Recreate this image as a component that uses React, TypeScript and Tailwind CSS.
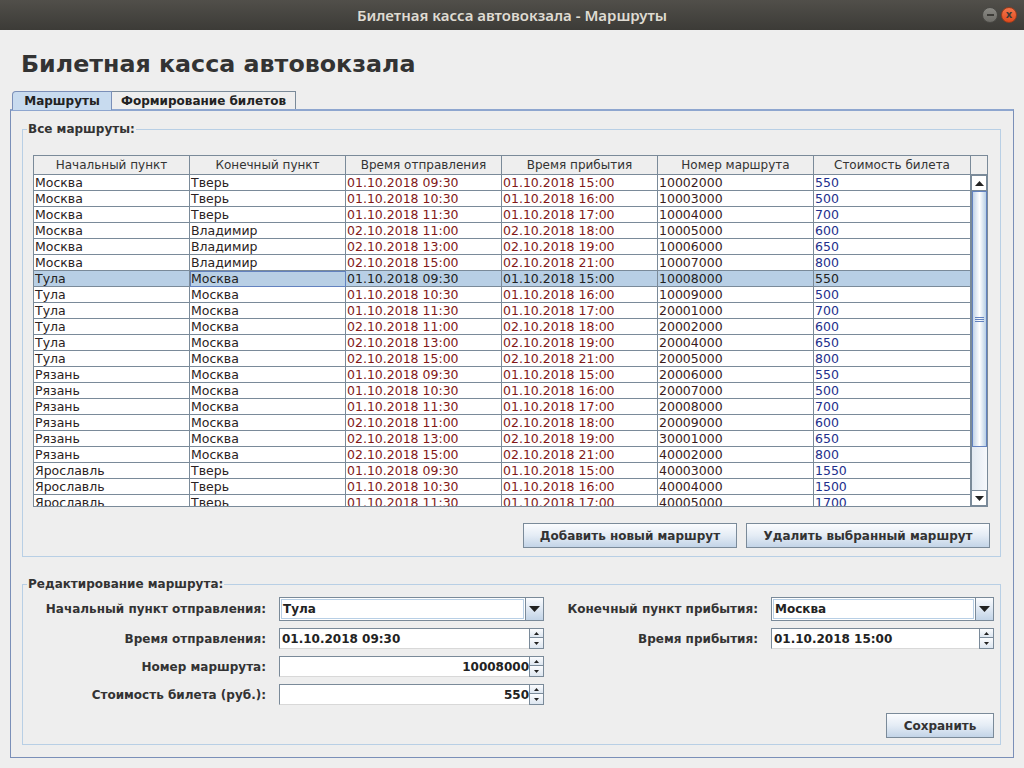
import React from "react";

type Row = [string, string, string, string, string, string];

const rows: Row[] = [
  ["Москва", "Тверь", "01.10.2018 09:30", "01.10.2018 15:00", "10002000", "550"],
  ["Москва", "Тверь", "01.10.2018 10:30", "01.10.2018 16:00", "10003000", "500"],
  ["Москва", "Тверь", "01.10.2018 11:30", "01.10.2018 17:00", "10004000", "700"],
  ["Москва", "Владимир", "02.10.2018 11:00", "02.10.2018 18:00", "10005000", "600"],
  ["Москва", "Владимир", "02.10.2018 13:00", "02.10.2018 19:00", "10006000", "650"],
  ["Москва", "Владимир", "02.10.2018 15:00", "02.10.2018 21:00", "10007000", "800"],
  ["Тула", "Москва", "01.10.2018 09:30", "01.10.2018 15:00", "10008000", "550"],
  ["Тула", "Москва", "01.10.2018 10:30", "01.10.2018 16:00", "10009000", "500"],
  ["Тула", "Москва", "01.10.2018 11:30", "01.10.2018 17:00", "20001000", "700"],
  ["Тула", "Москва", "02.10.2018 11:00", "02.10.2018 18:00", "20002000", "600"],
  ["Тула", "Москва", "02.10.2018 13:00", "02.10.2018 19:00", "20004000", "650"],
  ["Тула", "Москва", "02.10.2018 15:00", "02.10.2018 21:00", "20005000", "800"],
  ["Рязань", "Москва", "01.10.2018 09:30", "01.10.2018 15:00", "20006000", "550"],
  ["Рязань", "Москва", "01.10.2018 10:30", "01.10.2018 16:00", "20007000", "500"],
  ["Рязань", "Москва", "01.10.2018 11:30", "01.10.2018 17:00", "20008000", "700"],
  ["Рязань", "Москва", "02.10.2018 11:00", "02.10.2018 18:00", "20009000", "600"],
  ["Рязань", "Москва", "02.10.2018 13:00", "02.10.2018 19:00", "30001000", "650"],
  ["Рязань", "Москва", "02.10.2018 15:00", "02.10.2018 21:00", "40002000", "800"],
  ["Ярославль", "Тверь", "01.10.2018 09:30", "01.10.2018 15:00", "40003000", "1550"],
  ["Ярославль", "Тверь", "01.10.2018 10:30", "01.10.2018 16:00", "40004000", "1500"],
  ["Ярославль", "Тверь", "01.10.2018 11:30", "01.10.2018 17:00", "40005000", "1700"],
];

const headers = [
  "Начальный пункт",
  "Конечный пункт",
  "Время отправления",
  "Время прибытия",
  "Номер маршрута",
  "Стоимость билета",
];

const colW = ["w-[156px]", "w-[156px]", "w-[156px]", "w-[156px]", "w-[156px]", "w-[157px]"];
const colColor = [
  "text-[#2a2222]",
  "text-[#2a2222]",
  "text-[#821818]",
  "text-[#821818]",
  "text-[#3a1c1c]",
  "text-[#1d2f8c]",
];

const FONT = { fontFamily: '"DejaVu Sans", Verdana, sans-serif' };

function Triangle({ down = true, size = 5 }: { down?: boolean; size?: number }) {
  return (
    <svg width={size * 2 + 1} height={size + 1} viewBox={`0 0 ${size * 2 + 1} ${size + 1}`}>
      {down ? (
        <polygon points={`0,0 ${size * 2 + 1},0 ${size + 0.5},${size + 1}`} fill="#222" />
      ) : (
        <polygon points={`0,${size + 1} ${size * 2 + 1},${size + 1} ${size + 0.5},0`} fill="#222" />
      )}
    </svg>
  );
}

function Button({ label, w }: { label: string; w: string }) {
  return (
    <div
      className={`${w} h-[25px] border border-[#7a8a99] bg-gradient-to-b from-[#fbfcfe] via-[#e4ecf5] to-[#c3d4e7] flex items-center justify-center text-[12px] font-bold text-[#333]`}
    >
      {label}
    </div>
  );
}

function Combo({ value, w }: { value: string; w: string }) {
  return (
    <div className={`${w} h-[24px] border border-[#7a8a99] flex bg-white`}>
      <div className="flex-1 m-[1px] border border-[#b8cfe5] flex items-center px-[1px] text-[12px] font-bold text-[#222]">
        {value}
      </div>
      <div className="w-[18px] border-l border-[#7a8a99] bg-gradient-to-b from-[#fbfcfe] to-[#c3d4e7] flex items-center justify-center">
        <Triangle down size={5} />
      </div>
    </div>
  );
}

function Spinner({ value, w, right = false }: { value: string; w: string; right?: boolean }) {
  return (
    <div className={`${w} h-[21px] flex`}>
      <div
        className={`flex-1 bg-white border-t border-l border-[#7a8a99] border-b border-b-[#d8d8d8] flex items-center text-[12px] font-bold text-[#222] ${
          right ? "justify-end pr-0" : "pl-[2px]"
        }`}
      >
        {value}
      </div>
      <div className="w-[15px] flex flex-col">
        <div className="h-[10px] border border-[#7a8a99] bg-gradient-to-b from-[#fbfcfe] to-[#dde6f0] flex items-center justify-center">
          <Triangle down={false} size={2} />
        </div>
        <div className="h-[11px] border border-t-0 border-[#7a8a99] bg-gradient-to-b from-[#fbfcfe] to-[#dde6f0] flex items-center justify-center">
          <Triangle down size={2} />
        </div>
      </div>
    </div>
  );
}

function Label({ text, w }: { text: string; w: string }) {
  return (
    <div className={`${w} shrink-0 text-right text-[12px] font-bold text-[#333] pr-[13px] whitespace-nowrap`}>
      {text}
    </div>
  );
}

export default function App() {
  return (
    <div className="w-[1024px] h-[768px] bg-[#eeeeee] flex flex-col overflow-hidden" style={FONT}>
      {/* Title bar */}
      <div className="h-[30px] bg-gradient-to-b from-[#514f4a] to-[#3c3b37] flex items-center relative shrink-0">
        <div
          className="flex-1 text-center text-[15px] font-semibold text-[#dfdbd2]"
          style={{ fontFamily: '"Noto Sans", "Open Sans", sans-serif' }}
        >
          Билетная касса автовокзала - Маршруты
        </div>
        <div className="absolute right-[7px] top-[7px] flex gap-[3px]">
          <div className="w-[16px] h-[16px] rounded-full bg-gradient-to-b from-[#8a8984] to-[#6d6c67] border border-[#4a4945] flex items-center justify-center">
            <div className="w-[7px] h-[1.5px] bg-[#3c3b37]" />
          </div>
          <div className="w-[16px] h-[16px] rounded-full bg-gradient-to-b from-[#f4754a] to-[#df4a1c] border border-[#9c3c1c] flex items-center justify-center text-[10px] leading-none text-[#3c3b37] font-bold">
            x
          </div>
        </div>
      </div>

      {/* Heading */}
      <div className="h-[61px] pl-[21px] pt-[19px] shrink-0">
        <div className="text-[23.75px] leading-[30px] font-bold text-[#333]">Билетная касса автовокзала</div>
      </div>

      {/* Tabs */}
      <div className="flex pl-[12px] h-[18px] shrink-0 items-end">
        <div className="w-[100px] h-[19px] border border-b-0 border-[#7a8fb8] bg-[#c8dbef] rounded-tl-[4px] flex items-center justify-center text-[12px] font-bold text-[#222] relative z-10 -mb-[1px]">
          Маршруты
        </div>
        <div className="w-[184px] h-[18px] border border-b-0 border-l-0 border-[#7a8a99] bg-[#eeeeee] flex items-center justify-center text-[12px] font-bold text-[#222]">
          Формирование билетов
        </div>
      </div>

      {/* Tab panel */}
      <div className="ml-[10px] w-[1004px] h-[649px] border border-[#7a8fb8] border-t-[2px] border-t-[#8ea6cf] shrink-0 px-[11px] pt-[10px] flex flex-col">
        {/* Group 1 */}
        <div className="relative w-[979px] h-[428px] border border-[#b8cfe5] mt-[8px] px-[10px] pt-[25px] flex flex-col">
          <div className="absolute left-[4px] -top-[9px] bg-[#eeeeee] px-[1px] text-[12px] leading-[16px] font-bold text-[#333]">
            Все маршруты:
          </div>
          {/* Table scroll pane */}
          <div className="w-[955px] h-[352px] border border-[#7a8a99] bg-white flex flex-col overflow-hidden">
            {/* header */}
            <div className="flex h-[19px] shrink-0 bg-[#eeeeee]">
              {headers.map((h, i) => (
                <div
                  key={h}
                  className={`${colW[i]} shrink-0 border-r border-b border-[#7a8a99] flex items-center justify-center text-[12px] text-[#333]`}
                >
                  {h}
                </div>
              ))}
              <div className="flex-1 border-b border-[#7a8a99]" />
            </div>
            <div className="flex flex-1 overflow-hidden">
              <div className="flex flex-col w-[937px] overflow-hidden">
                {rows.map((r, ri) => {
                  const sel = ri === 6;
                  return (
                    <div key={ri} className={`flex h-[16px] shrink-0 ${sel ? "bg-[#b8cfe5]" : "bg-white"}`}>
                      {r.map((c, ci) => (
                        <div
                          key={ci}
                          className={`${colW[ci]} shrink-0 border-r border-b border-[#7a8a99] pl-[1px] text-[12.5px] leading-[15px] whitespace-nowrap overflow-hidden ${
                            sel ? "text-[#222]" : colColor[ci]
                          } ${sel && ci === 1 ? "outline outline-1 -outline-offset-1 outline-[#6382bf]" : ""}`}
                        >
                          {c}
                        </div>
                      ))}
                    </div>
                  );
                })}
              </div>
              {/* Scrollbar */}
              <div className="flex-1 flex flex-col bg-[#eeeeee] border-l border-[#7a8a99]">
                <div className="h-[16px] bg-white border border-[#7a8a99] border-l-0 flex items-center justify-center">
                  <Triangle down={false} size={4} />
                </div>
                <div className="h-[256px] border border-[#6382bf] bg-gradient-to-r from-[#c3d4e7] via-[#ffffff] to-[#b8cfe5] flex items-center justify-center">
                  <div className="flex flex-col gap-[1px]">
                    <div className="w-[9px] h-[1px] bg-[#6382bf]" />
                    <div className="w-[9px] h-[1px] bg-[#6382bf]" />
                    <div className="w-[9px] h-[1px] bg-[#6382bf]" />
                  </div>
                </div>
                <div className="flex-1 bg-gradient-to-r from-[#e2e9f1] to-[#f6f8fb]" />
                <div className="h-[16px] bg-white border border-[#7a8a99] border-l-0 flex items-center justify-center">
                  <Triangle down size={4} />
                </div>
              </div>
            </div>
          </div>
          {/* buttons */}
          <div className="flex justify-end gap-[9px] mt-[16px]">
            <Button label="Добавить новый маршрут" w="w-[214px]" />
            <Button label="Удалить выбранный маршрут" w="w-[244px]" />
          </div>
        </div>

        {/* Group 2 */}
        <div className="relative w-[979px] h-[161px] border border-[#b8cfe5] mt-[27px] flex">
          <div className="absolute left-[4px] -top-[9px] bg-[#eeeeee] px-[1px] text-[12px] leading-[16px] font-bold text-[#333]">
            Редактирование маршрута:
          </div>
          {/* left column */}
          <div className="flex flex-col pt-[12px]">
            <div className="flex items-center h-[24px]">
              <Label text="Начальный пункт отправления:" w="w-[256px]" />
              <Combo value="Тула" w="w-[265px]" />
            </div>
            <div className="flex items-center h-[21px] mt-[7px]">
              <Label text="Время отправления:" w="w-[256px]" />
              <Spinner value="01.10.2018 09:30" w="w-[265px]" />
            </div>
            <div className="flex items-center h-[21px] mt-[7px]">
              <Label text="Номер маршрута:" w="w-[256px]" />
              <Spinner value="10008000" w="w-[265px]" right />
            </div>
            <div className="flex items-center h-[21px] mt-[7px]">
              <Label text="Стоимость билета (руб.):" w="w-[256px]" />
              <Spinner value="550" w="w-[265px]" right />
            </div>
          </div>
          {/* right column */}
          <div className="flex flex-col pt-[12px] flex-1">
            <div className="flex items-center h-[24px]">
              <Label text="Конечный пункт прибытия:" w="w-[227px]" />
              <Combo value="Москва" w="w-[223px]" />
            </div>
            <div className="flex items-center h-[21px] mt-[7px]">
              <Label text="Время прибытия:" w="w-[227px]" />
              <Spinner value="01.10.2018 15:00" w="w-[223px]" />
            </div>
            <div className="flex-1" />
            <div className="flex justify-end pr-[6px] pb-[6px]">
              <Button label="Сохранить" w="w-[108px]" />
            </div>
          </div>
        </div>
      </div>
    </div>
  );
}
